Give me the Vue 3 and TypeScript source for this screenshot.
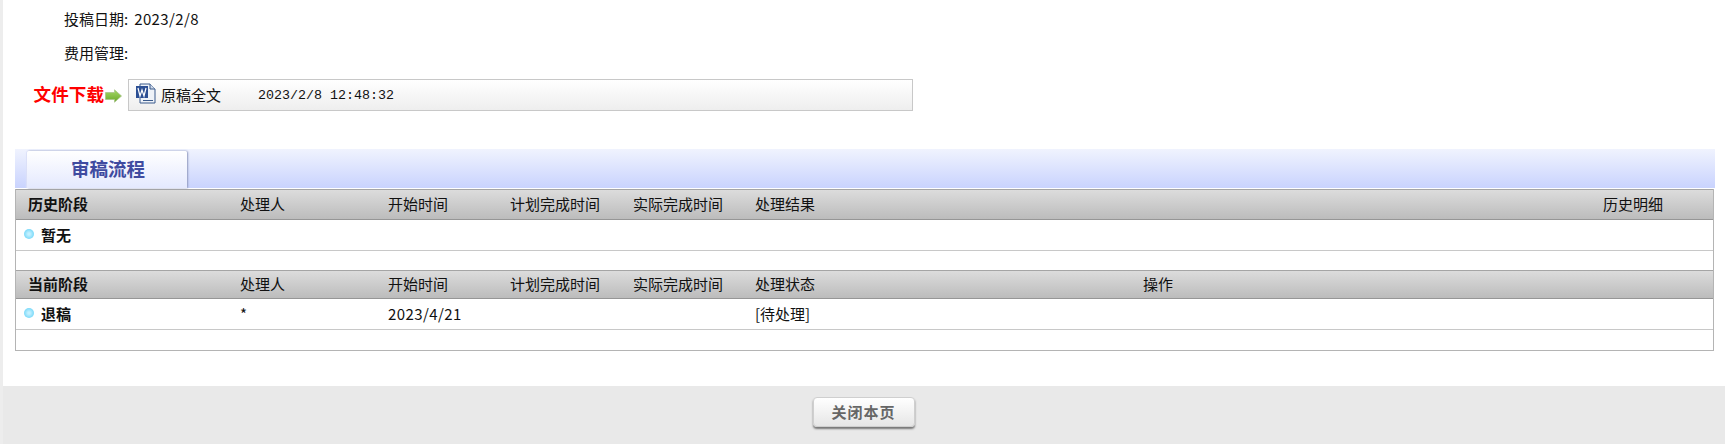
<script setup lang="ts">
interface Row { cells: string[] }
const histHead: string[] = ['历史阶段','处理人','开始时间','计划完成时间','实际完成时间','处理结果','历史明细']
const curHead: string[] = ['当前阶段','处理人','开始时间','计划完成时间','实际完成时间','处理状态','操作']
const curRow: Row = { cells: ['*','2023/4/21','','','[待处理]'] }
</script>

<template>
  <div class="page">
    <main class="main">
      <div class="info"><span class="lab">投稿日期:</span><span class="num">2023/2/8</span></div>
      <div class="info second"><span class="lab">费用管理:</span></div>
      <div class="files">
        <b class="dl">文件下载</b>
        <svg class="arrow" width="17" height="14" viewBox="0 0 17 14">
          <defs>
            <linearGradient id="ag" x1="0" y1="0" x2="0" y2="1">
              <stop offset="0" stop-color="#a5d867"/>
              <stop offset="1" stop-color="#6aa82a"/>
            </linearGradient>
          </defs>
          <path d="M.5 3.5H9.5V.8L16.5 7L9.5 13.2V10.5H.5Z" fill="url(#ag)" stroke="#a8c48a" stroke-width=".8"/>
        </svg>
        <div class="filebox">
          <svg class="doc" width="21" height="21" viewBox="0 0 21 21">
            <path d="M5 1H15L20 6V20H5Z" fill="#eef2f8" stroke="#3a5a8c"/>
            <path d="M15 1V6H20" fill="#cfd9e8" stroke="#3a5a8c"/>
            <rect x="1" y="3" width="12" height="12" fill="#2c4f94"/>
            <path d="M3 5L5 13L7 7L9 13L11 5" fill="none" stroke="#fff" stroke-width="1.2"/>
            <path d="M8 17.5H18" stroke="#3a5a8c"/>
          </svg>
          <span class="fname">原稿全文</span>
          <span class="ftime">2023/2/8 12:48:32</span>
        </div>
      </div>

      <div class="tabbar"><div class="tab">审稿流程</div></div>

      <div class="flow">
        <div class="grid head hist">
          <b>{{ histHead[0] }}</b>
          <span v-for="h in histHead.slice(1)" :key="h">{{ h }}</span>
        </div>
        <div class="grid row hist">
          <b class="stage"><i class="dot"></i>暂无</b>
        </div>
        <div class="blank"></div>
        <div class="grid head cur">
          <b>{{ curHead[0] }}</b>
          <span v-for="h in curHead.slice(1)" :key="h">{{ h }}</span>
        </div>
        <div class="grid row cur">
          <b class="stage"><i class="dot"></i>退稿</b>
          <span v-for="(c, i) in curRow.cells" :key="i" :class="{ num: i === 1 }">{{ c }}</span>
        </div>
        <div class="blank end"></div>
      </div>
    </main>
    <footer class="foot"><button class="close" type="button">关闭本页</button></footer>
  </div>
</template>

<style>
html, body { margin: 0; background: #fff; }
</style>

<style scoped>
.page {
  width: 1725px;
  height: 444px;
  overflow: hidden;
  font-family: "Noto Sans CJK SC", "Liberation Sans", sans-serif;
  font-size: 15px;
  color: #111;
  border-left: 3px solid #ededed;
  box-sizing: border-box;
}
.main { height: 386px; box-sizing: border-box; padding: 9px 0 0 12px; }
.info { display: flex; gap: 6px; padding-left: 49px; height: 20px; line-height: 20px; }
.second { margin-top: 14px; }
.num { letter-spacing: .4px; }
.files { display: flex; align-items: center; margin-top: 16px; height: 32px; }
.dl { width: 89px; padding-bottom: 2px; text-align: right; color: #f00; font-size: 17.6px; font-weight: 700; line-height: 30px; }
.arrow { margin: 2px 6px 0 1px; }
.filebox {
  width: 785px;
  height: 32px;
  box-sizing: border-box;
  border: 1px solid #c8c8c8;
  background: linear-gradient(#fff, #eee);
  display: flex;
  align-items: center;
  padding-left: 6px;
}
.doc { margin-right: 5px; margin-bottom: 3px; }
.fname { padding-bottom: 2px; }
.ftime { font-family: "Liberation Mono", monospace; font-size: 13.33px; margin-left: 37px; }
.tabbar {
  margin-top: 38px;
  height: 39px;
  width: 1700px;
  background: linear-gradient(#f0f3fe, #c9d3fe);
  display: flex;
  box-sizing: border-box;
  padding: 2px 0 0 12px;
}
.tab {
  width: 160px;
  height: 37px;
  box-sizing: border-box;
  background: linear-gradient(#fff, #e4e9fe);
  box-shadow: 1px 0 2px #8f98bd, 0 -1px 1px #e6e9f8, -1px 0 1px #dfe4fb;
  border-radius: 2px 2px 0 0;
  padding-left: 2px;
  color: #3f4ba0;
  font-size: 18.5px;
  font-weight: 700;
  text-align: center;
  line-height: 35px;
}
.flow {
  width: 1699px;
  margin-top: 1px;
  box-sizing: border-box;
  border: 1px solid #b4b4b4;
  border-top: 0;
}
.grid { display: grid; align-items: center; padding-left: 12px; }
.hist { grid-template-columns: 212px 148px 122px 123px 122px 848px 1fr; }
.cur { grid-template-columns: 212px 148px 122px 123px 122px 388px 1fr; }
.head {
  height: 31px;
  box-sizing: border-box;
  background: linear-gradient(#dcdcdc, #bcbcbc);
  border-top: 1px solid #a5a5a5;
  border-bottom: 1px solid #969696;
  padding-bottom: 2px;
}
.head.cur { height: 29px; }
.row { height: 31px; box-sizing: border-box; border-bottom: 1px solid #c8c8c8; padding-left: 8px; padding-bottom: 2px; }
.row.hist { grid-template-columns: 1fr; }
.row.cur { grid-template-columns: 216px 148px 122px 123px 122px 1fr; }
.stage { display: flex; align-items: center; gap: 7px; }
.dot {
  width: 10px;
  height: 10px;
  border-radius: 50%;
  background: radial-gradient(circle, #c4f1ff 15%, #55cdf6 100%);
}
.blank { height: 19px; }
.end { height: 20px; }
.foot {
  height: 58px;
  background: #e9e9e9;
  display: flex;
  justify-content: center;
  align-items: center;
  padding: 0 1px 7px 0;
  box-sizing: border-box;
}
.close {
  width: 102px;
  height: 30px;
  border: 1px solid #cfcfcf;
  border-radius: 4px;
  background: linear-gradient(#fff, #e6e6e6);
  box-shadow: 0 2px 2px #777;
  color: #666;
  font-family: inherit;
  font-size: 15px;
  font-weight: 700;
  padding: 0;
  letter-spacing: 1px;
}
</style>
